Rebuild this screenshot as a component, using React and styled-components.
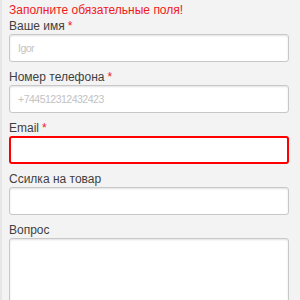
import React from "react";
import styled, { createGlobalStyle } from "styled-components";

const fields = [
	{ label: "Ваше имя", required: true, placeholder: "Igor" },
	{ label: "Номер телефона", required: true, placeholder: "+744512312432423" },
	{ label: "Email", required: true, placeholder: "", error: true },
	{ label: "Ссилка на товар", required: false, placeholder: "" },
];

function App() {
	return (
		<>
			<GlobalStyle />
			<Page>
				<Form>
					<ErrorText>Заполните обязательные поля!</ErrorText>
					{fields.map((f) => (
						<Field key={f.label}>
							<Label>
								{f.label}
								{f.required && <Star>*</Star>}
							</Label>
							<Input placeholder={f.placeholder} $error={f.error} />
						</Field>
					))}
					<Field>
						<Label>Вопрос</Label>
						<TextArea />
					</Field>
				</Form>
			</Page>
		</>
	);
}

export default App;

const GlobalStyle = createGlobalStyle`
	body {
		margin: 0;
		background: #f3f3f3;
		font-family: "Liberation Sans", Arial, sans-serif;
	}
`;

const Page = styled.div`
	height: 300px;
	overflow: hidden;
	border-left: 2px solid #e6e6e6;
	box-sizing: border-box;
`;

const Form = styled.form`
	display: flex;
	flex-direction: column;
	padding: 2px 11px 0 7px;
`;

const ErrorText = styled.div`
	color: #f01a1a;
	font-size: 12px;
	line-height: 16px;
`;

const Field = styled.div`
	display: flex;
	flex-direction: column;
	margin-bottom: 7px;
`;

const Label = styled.label`
	font-size: 12px;
	line-height: 16px;
	color: #3f3f3f;
`;

const Star = styled.span`
	color: #f01a1a;
	margin-left: 3px;
`;

const Input = styled.input`
	box-sizing: border-box;
	height: 28px;
	width: 100%;
	padding: 0 8px;
	font-family: "Liberation Sans", Arial, sans-serif;
	font-size: 10.5px;
	letter-spacing: -0.5px;
	background: #fff;
	border: ${(p) => (p.$error ? "2px solid #f00" : "1px solid #c8c8c8")};
	border-radius: 3px;
	box-shadow: ${(p) => (p.$error ? "none" : "inset 0 1px 2px rgba(0, 0, 0, 0.12)")};
	outline: none;

	&::placeholder {
		color: #c2c2c2;
	}
`;

const TextArea = styled.textarea`
	box-sizing: border-box;
	height: 90px;
	width: 100%;
	background: #fff;
	border: 1px solid #c8c8c8;
	border-radius: 3px;
	box-shadow: inset 0 1px 2px rgba(0, 0, 0, 0.12);
	resize: none;
	outline: none;
`;
